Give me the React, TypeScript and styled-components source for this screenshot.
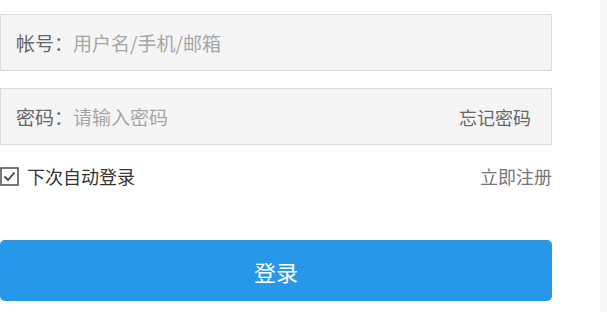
import React from "react";
import styled, { createGlobalStyle } from "styled-components";

const Global = createGlobalStyle`
  html, body { margin: 0; padding: 0; background: #fff; }
  body { font-family: "Noto Sans CJK SC", "Noto Sans", sans-serif; }
  * { box-sizing: border-box; }
`;

const Page = styled.div`
  display: flex;
  width: 607px;
  height: 312px;
  overflow: hidden;
`;

const Form = styled.form`
  width: 552px;
  padding-top: 14px;
  display: flex;
  flex-direction: column;
`;

const Spacer = styled.div`
  flex: 1;
`;

const Strip = styled.div`
  width: 7px;
  background: #f6f6f6;
`;

const Field = styled.label<{ $mt?: number }>`
  display: flex;
  align-items: center;
  height: 57px;
  margin-top: ${(p) => p.$mt ?? 0}px;
  padding: 0 20px 0 15px;
  background: #f5f5f5;
  border: 1px solid #dcdcdc;
  font-size: 19px;
`;

const Label = styled.span`
  color: #666;
  white-space: nowrap;
`;

const Input = styled.input`
  flex: 1;
  min-width: 0;
  border: 0;
  outline: 0;
  background: transparent;
  font: inherit;
  color: #333;
  padding: 0;
  &::placeholder { color: #a6a6a6; }
`;

const Forgot = styled.a`
  color: #666;
  font-size: 18px;
  text-decoration: none;
`;

const OptionRow = styled.div`
  display: flex;
  align-items: center;
  justify-content: space-between;
  height: 26px;
  margin-top: 18px;
  font-size: 18px;
`;

const Remember = styled.label`
  display: flex;
  align-items: center;
  gap: 8px;
  color: #333;
`;

const Register = styled.a`
  color: #777;
  text-decoration: none;
`;

const Button = styled.button`
  margin-top: 51px;
  height: 61px;
  border: 0;
  border-top: 1px solid #3a8fd0;
  border-radius: 5px;
  background: #2798e9;
  color: #fff;
  font-family: inherit;
  font-size: 22px;
`;

const CheckIcon = () => (
  <svg width="19" height="19" viewBox="0 0 19 19">
    <rect x="1" y="1" width="17" height="17" fill="#fff" stroke="#555" strokeWidth="1.6" />
    <path d="M4.5 9.5 L8 13 L14.5 5.5" fill="none" stroke="#444" strokeWidth="1.8" />
  </svg>
);

export default function App() {
  return (
    <>
      <Global />
      <Page>
        <Form onSubmit={(e) => e.preventDefault()}>
          <Field>
            <Label>帐号：</Label>
            <Input placeholder="用户名/手机/邮箱" />
          </Field>
          <Field $mt={17}>
            <Label>密码：</Label>
            <Input type="password" placeholder="请输入密码" />
            <Forgot href="#">忘记密码</Forgot>
          </Field>
          <OptionRow>
            <Remember>
              <CheckIcon />
              下次自动登录
            </Remember>
            <Register href="#">立即注册</Register>
          </OptionRow>
          <Button type="submit">登录</Button>
        </Form>
        <Spacer />
        <Strip />
      </Page>
    </>
  );
}
